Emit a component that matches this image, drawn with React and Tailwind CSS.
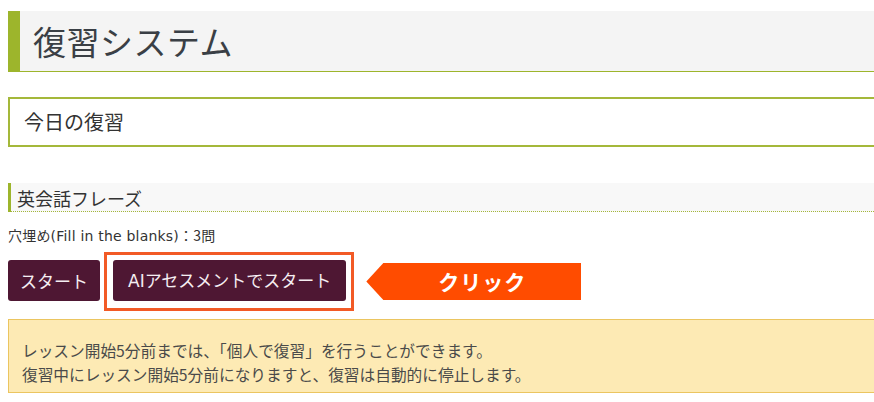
import React from "react";

export default function App() {
  return (
    <div className="w-[874px] h-[402px] overflow-hidden bg-white pl-2 pt-[11px] text-[#333] font-['Noto_Sans_CJK_JP',sans-serif]">
      <div className="-mr-4 h-[61px] border-l-[12px] border-b border-[#9db52c] bg-[#f4f4f4] flex items-center pl-[13px]">
        <h1 className="text-[33px] leading-none text-[#3a3f45] tracking-[0.5px]">復習システム</h1>
      </div>

      <div className="-mr-4 mt-[25px] h-[50px] border-2 border-[#a4b83a] flex items-center pl-[14px]">
        <span className="text-[20px] leading-none text-[#333]">今日の復習</span>
      </div>

      <div className="-mr-4 mt-[36px] h-[29px] border-l-[3px] border-[#9db52c] bg-[#f8f8f8] flex items-center pl-[6px] relative">
        <span className="text-[18px] leading-none text-[#333]">英会話フレーズ</span>
        <div className="absolute left-0 right-0 bottom-0 border-b border-dotted border-[#a4b83a]" />
      </div>

      <div className="mt-[16px] text-[14px] leading-none text-[#333] font-['DejaVu_Sans','Noto_Sans_CJK_JP',sans-serif] tracking-[0.2px]">
        <span className="font-['Noto_Sans_CJK_JP',sans-serif]">穴埋め</span>(Fill in the blanks)<span className="font-['Noto_Sans_CJK_JP',sans-serif]">：3問</span>
      </div>

      <div className="mt-[17px] flex items-center">
        <button className="h-[41px] px-[12px] rounded-[3px] bg-[#4e1733] text-[#f5eef2] text-[17px] leading-none">
          スタート
        </button>
        <div className="relative ml-[13px]">
          <span className="absolute left-[-9px] right-[-8px] top-[-8px] bottom-[-10px] border-[3px] border-[#f25a26]" />
          <button className="relative h-[41px] px-[15px] rounded-[3px] bg-[#4e1733] text-[#f5eef2] text-[17px] leading-none font-['DejaVu_Sans','Noto_Sans_CJK_JP',sans-serif]">
            AI<span className="font-['Noto_Sans_CJK_JP',sans-serif]">アセスメントでスタート</span>
          </button>
        </div>
        <div className="ml-[20px] mt-[2px] w-[215px] h-[37px] bg-[#ff4c00] [clip-path:polygon(0_50%,17px_0,100%_0,100%_100%,17px_100%)] flex items-center justify-center pl-[17px]">
          <span className="text-white font-bold text-[21px] leading-none tracking-[1px]">クリック</span>
        </div>
      </div>

      <div className="-mr-4 mt-[18px] h-[74px] border border-[#ebc560] bg-[#fdeab4] pl-[13px] pt-[19px] text-[15.7px] leading-[24px] text-[#4a4a4a]">
        <p>レッスン開始5分前までは、「個人で復習」を行うことができます。</p>
        <p>復習中にレッスン開始5分前になりますと、復習は自動的に停止します。</p>
      </div>
    </div>
  );
}
